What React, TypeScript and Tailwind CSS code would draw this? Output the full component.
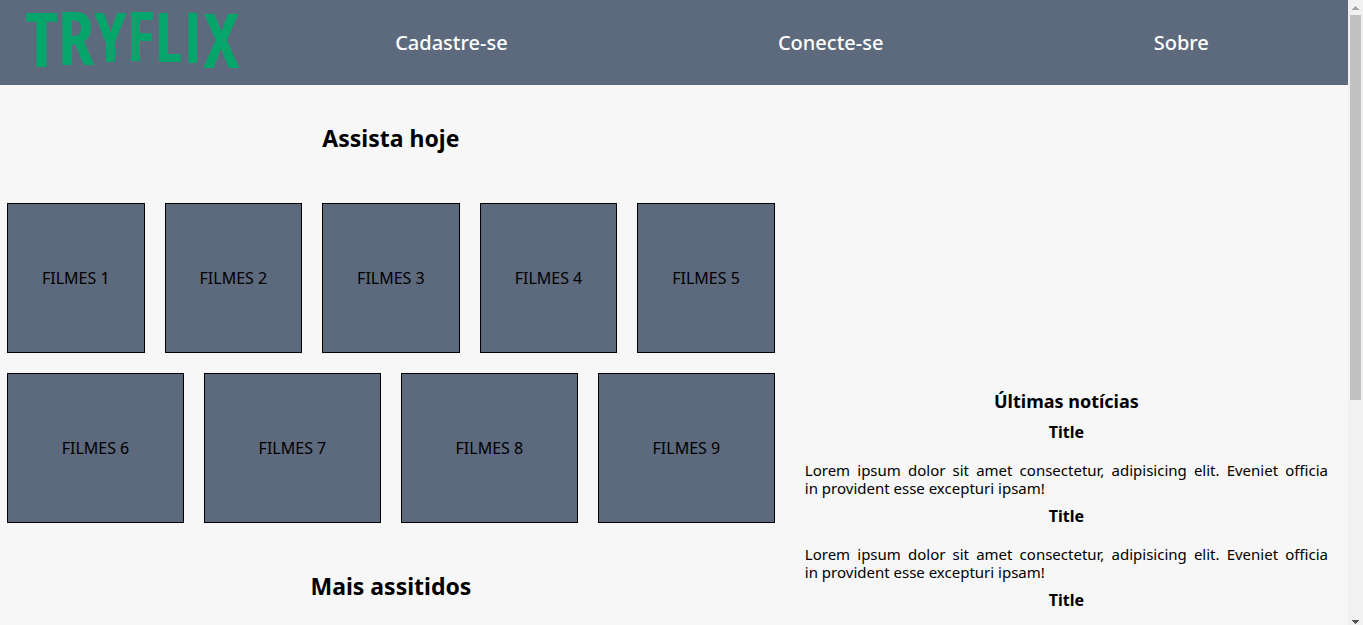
const navLinks = ["Cadastre-se", "Conecte-se", "Sobre"];

const films = [
  ["FILMES 1", "FILMES 2", "FILMES 3", "FILMES 4", "FILMES 5"],
  ["FILMES 6", "FILMES 7", "FILMES 8", "FILMES 9"],
];

const summary =
  "Lorem ipsum dolor sit amet consectetur, adipisicing elit. Eveniet officia in\u00a0provident esse excepturi ipsam!";

const news = [summary, summary, ""];

function Logo() {
  return (
    <svg
      viewBox="0 0 260 85"
      className="h-[85px] w-[260px] shrink-0 overflow-visible fill-[#06a56b] font-['Open_Sans_Condensed','Roboto_Condensed',sans-serif] font-bold"
      role="img"
      aria-label="TRYFLIX"
    >
      <text x="25">
        <tspan y="67" fontSize="76">T</tspan>
        <tspan y="65" fontSize="73">R</tspan>
        <tspan y="62" fontSize="69">Y</tspan>
        <tspan y="61" fontSize="68">F</tspan>
        <tspan y="62" fontSize="69">L</tspan>
        <tspan y="63" fontSize="70">I</tspan>
        <tspan y="68" fontSize="76">X</tspan>
      </text>
    </svg>
  );
}

function Header() {
  return (
    <header className="flex h-[85px] items-center bg-[#5d697c]">
      <Logo />
      <nav className="flex flex-1 justify-around pr-1 text-[20px] leading-6 font-medium text-white">
        {navLinks.map((label) => (
          <a key={label} href="#">
            {label}
          </a>
        ))}
      </nav>
    </header>
  );
}

function Heading({ children }: { children: string }) {
  return <h2 className="pt-[39px] pb-[41px] text-center text-[23px] leading-7 font-bold">{children}</h2>;
}

function ScrollBar() {
  return (
    <div className="flex w-[15px] shrink-0 flex-col items-center bg-[#f1f1f1]" aria-hidden="true">
      <svg viewBox="0 0 15 15" className="size-[15px]" shapeRendering="crispEdges">
        <path d="M4 10h7V9h-1V8H9V7H8V6H7v1H6v1H5v1H4z" fill="#a3a3a3" />
      </svg>
      <div className="h-[385px] w-[11px] bg-[#c1c1c1]" />
      <svg viewBox="0 0 15 15" className="mt-auto size-[15px]" shapeRendering="crispEdges">
        <path d="M4 10h7v1h-1v1H9v1H8v1H7v-1H6v-1H5v-1H4z" fill="#505050" />
      </svg>
    </div>
  );
}

export default function App() {
  return (
    <div className="flex h-screen overflow-hidden bg-[#f7f7f7] font-['Noto_Sans',sans-serif] text-black">
      <div className="min-w-0 flex-1">
        <Header />
        <main className="flex">
          <section className="w-[58%] px-[7px]">
            <Heading>Assista hoje</Heading>
            <div className="flex flex-col gap-5 py-[10px]">
              {films.map((row) => (
                <div key={row[0]} className="flex gap-5">
                  {row.map((film) => (
                    <article
                      key={film}
                      className="flex h-[150px] flex-1 items-center justify-center border border-black bg-[#5d697c] text-[16px]"
                    >
                      {film}
                    </article>
                  ))}
                </div>
              ))}
            </div>
            <Heading>Mais assitidos</Heading>
          </section>
          <aside className="w-[42%] pt-[304px] pr-5 pl-[23px]">
            <h3 className="text-center text-[18px] leading-6 font-bold">Últimas notícias</h3>
            {news.map((body, index) => (
              <article key={index} className="pt-[10px]">
                <h4 className="text-center text-[16px] leading-[18px] font-bold">Title</h4>
                {body && <p className="mt-5 text-justify text-[15px] leading-[18px]">{body}</p>}
              </article>
            ))}
          </aside>
        </main>
      </div>
      <ScrollBar />
    </div>
  );
}
